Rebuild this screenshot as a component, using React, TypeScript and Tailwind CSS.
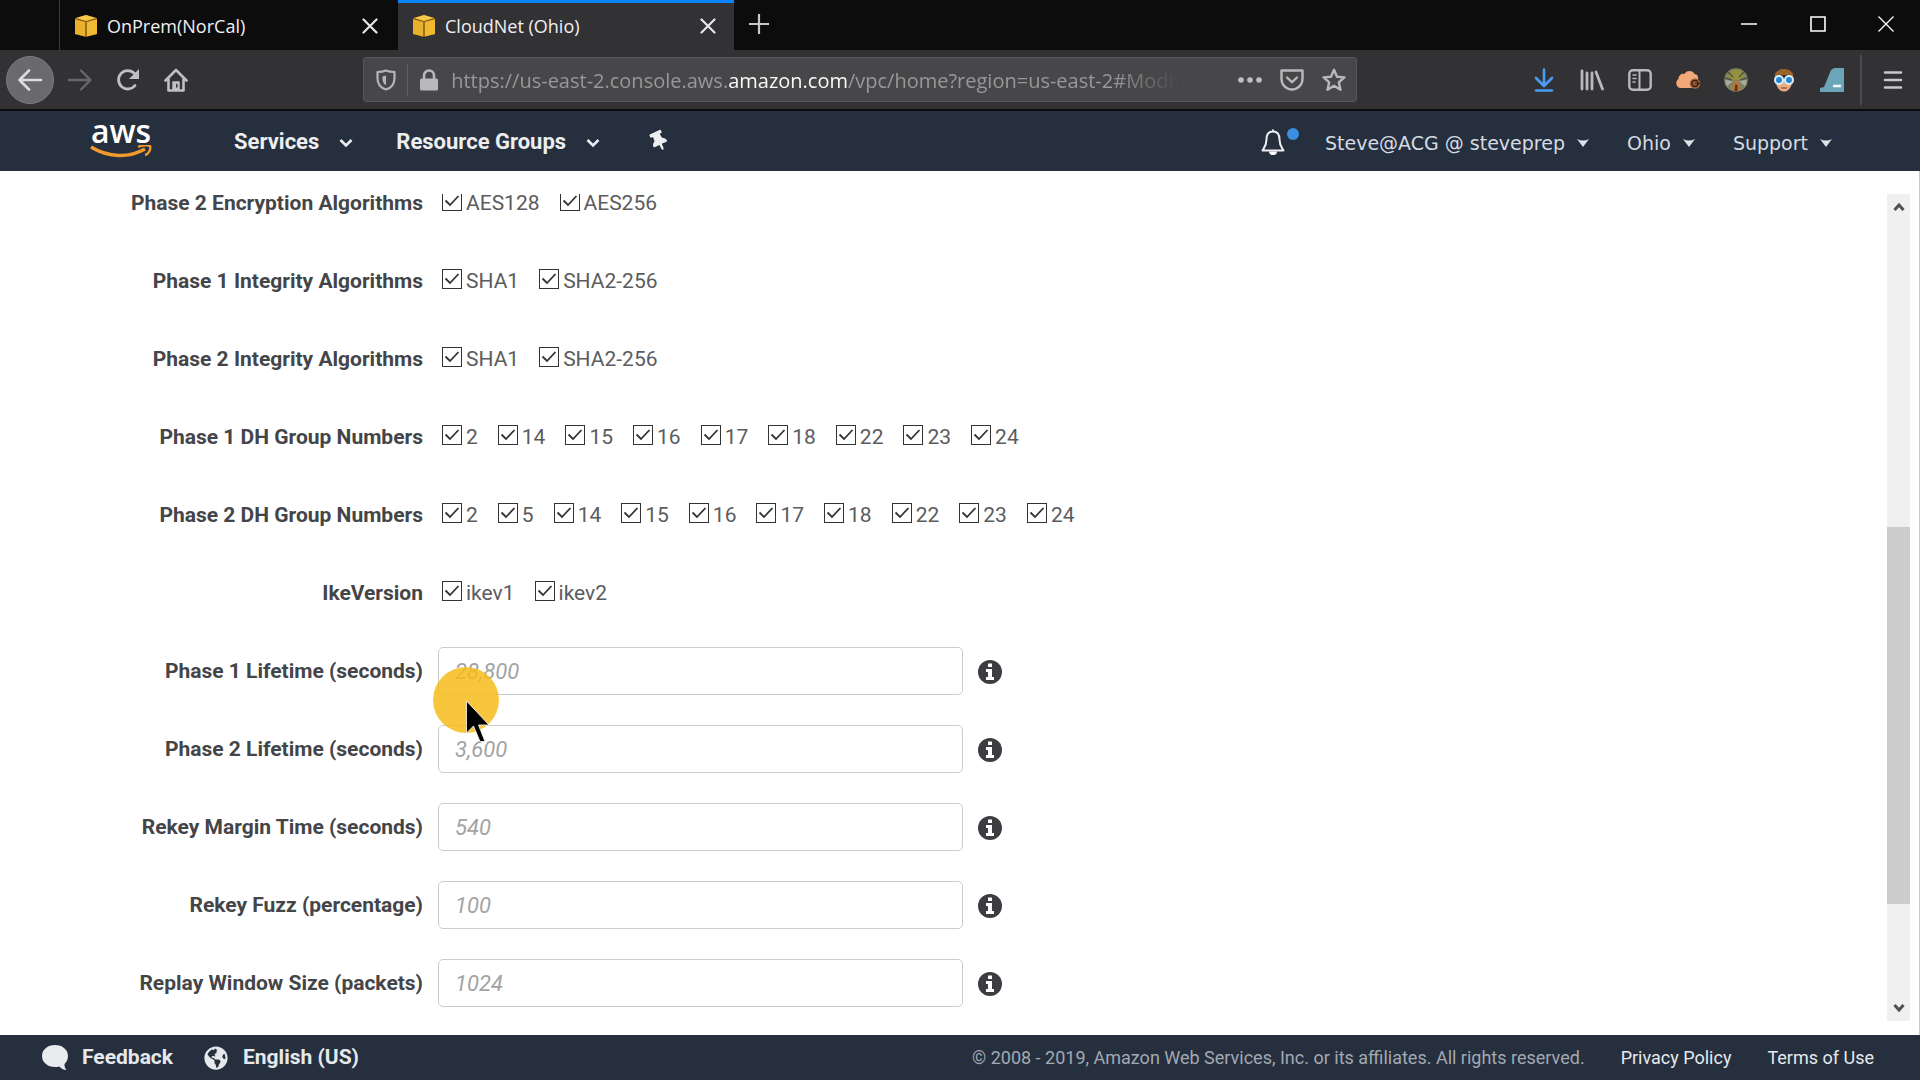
import type { ReactNode } from "react";
import { FaThumbtack, FaGlobeAmericas } from "react-icons/fa";

function Cube() {
  return (
    <svg viewBox="0 0 24 24" className="size-6 shrink-0">
      <path d="M12 1 23 4v16l-11 3L1 20V4z" fill="#8a5f10" />
      <path d="M12 1 22 4 12 7 2 4z" fill="#f7c94b" />
      <path d="M1 5.200 11.200 8v14.500L1 20z" fill="#e9b02b" />
      <path d="M23 5.200 12.800 8v14.500L23 20z" fill="#f0b932" />
    </svg>
  );
}

function Cross() {
  return (
    <svg viewBox="0 0 16 16" className="size-4" stroke="#e6e6e8" strokeWidth="2.200" strokeLinecap="round">
      <path d="M1.500 1.500l13 13M14.500 1.500l-13 13" />
    </svg>
  );
}

function Tab({ title, active }: { title: string; active?: boolean }) {
  return (
    <div
      className={
        active
          ? "flex w-[336px] items-center border-t-[3px] border-[#0a84ff] bg-[#323234] pb-[2px] pl-[14px] pr-[18px]"
          : "flex w-[339px] items-center border-l border-[#3a3a3c] pl-[14px] pr-[20px] pt-px"
      }
    >
      <Cube />
      <span className="ml-[9px] flex-1 text-lg text-[#f0f0f2]">{title}</span>
      <button aria-label={"Close " + title}>
        <Cross />
      </button>
    </div>
  );
}

function ToolButton({ label, children }: { label: string; children: ReactNode }) {
  return (
    <button aria-label={label} className="flex h-12 w-12 items-center justify-center">
      {children}
    </button>
  );
}

function TabStrip() {
  return (
    <header className="flex h-[50px] shrink-0 bg-[#0c0c0d] pl-[59px]">
      <Tab title="OnPrem(NorCal)" />
      <Tab title="CloudNet (Ohio)" active />
      <button aria-label="New tab" className="flex w-[50px] items-center justify-center pb-[2px]">
        <svg viewBox="0 0 22 22" className="size-[22px]" stroke="#c8c8ca" strokeWidth="2.200">
          <path d="M11 1v20M1 11h20" />
        </svg>
      </button>
      <div className="flex flex-1 justify-end pb-[2px]">
        <button aria-label="Minimize" className="flex w-[69px] items-center justify-center">
          <svg viewBox="0 0 16 16" className="size-4" stroke="#fff" strokeWidth="1.500">
            <path d="M0 8h16" />
          </svg>
        </button>
        <button aria-label="Maximize" className="flex w-[69px] items-center justify-center">
          <svg viewBox="0 0 16 16" className="size-4" fill="none" stroke="#fff" strokeWidth="1.600">
            <path d="M1 1h14v14H1z" />
          </svg>
        </button>
        <button aria-label="Close window" className="flex w-[68px] items-center justify-center">
          <svg viewBox="0 0 16 16" className="size-4" stroke="#fff" strokeWidth="1.300">
            <path d="M.5.5l15 15M15.500.5l-15 15" />
          </svg>
        </button>
      </div>
    </header>
  );
}

function AddressBar() {
  return (
    <div className="flex h-[45px] flex-1 items-center rounded-[3px] border border-[#58585b] bg-[#474749]">
      <button aria-label="Tracking protection" className="flex h-8 w-11 items-center justify-center border-r border-[#626265]">
        <svg viewBox="0 0 20 22" className="h-[22px] w-5" fill="none" stroke="#b6b6b8" strokeWidth="2.200">
          <path d="M10 1.500c2.500 1.200 5 1.500 8.500 1.500v6c0 6-3.500 10-8.500 11.500C5 19 1.500 15 1.500 9V3C5 3 7.500 2.700 10 1.500z" strokeLinejoin="round" />
          <path d="M10 6.500c-1.200.4-2.300.6-3.500.7V10c0 3 1.300 5 3.500 6.200z" fill="#b6b6b8" stroke="none" />
        </svg>
      </button>
      <button aria-label="Site information" className="ml-[11px] w-5">
        <svg viewBox="0 0 20 22" className="h-[22px] w-5">
          <path d="M5 10V6.500a5 5 0 0 1 10 0V10" fill="none" stroke="#b9b9bb" strokeWidth="2.600" />
          <rect x="1" y="9.500" width="18" height="12" rx="1.500" fill="#b9b9bb" />
        </svg>
      </button>
      <div className="ml-3 min-w-0 max-w-[728px] flex-1 overflow-hidden whitespace-nowrap pt-[2px] text-xl text-[#98989a] [mask-image:linear-gradient(to_right,black_91%,transparent)]">
        https://us-east-2.console.aws.<span className="text-[#f9f9fa]">amazon.com</span>/vpc/home?region=us-east-2#Modif
      </div>
      <div className="ml-auto flex pr-px">
        <button aria-label="Page actions" className="flex w-[42px] items-center justify-center">
          <svg viewBox="0 0 24 6" className="h-[6px] w-6" fill="#c0c0c2">
            <circle cx="3" cy="3" r="2.800" />
            <circle cx="12" cy="3" r="2.800" />
            <circle cx="21" cy="3" r="2.800" />
          </svg>
        </button>
        <button aria-label="Save to Pocket" className="flex w-[42px] items-center justify-center">
          <svg viewBox="0 0 24 22" className="h-[22px] w-6" fill="none" stroke="#b9b9bb" strokeWidth="2.400" strokeLinejoin="round" strokeLinecap="round">
            <path d="M1.500 1.500h21v8.500a10.500 10.500 0 0 1-21 0z" />
            <path d="M7 8.500l5 4.700 5-4.700" />
          </svg>
        </button>
        <button aria-label="Bookmark this page" className="flex w-[42px] items-center justify-center">
          <svg viewBox="0 0 24 24" className="size-6" fill="none" stroke="#b9b9bb" strokeWidth="2.400" strokeLinejoin="round">
            <path d="M12 1.800l3 6.900 7.400.7-5.600 4.900 1.700 7.400L12 17.800l-6.500 3.900 1.700-7.400L1.600 9.400 9 8.700z" />
          </svg>
        </button>
      </div>
    </div>
  );
}

function Toolbar() {
  return (
    <div className="flex h-[61px] shrink-0 items-center border-b-2 border-[#0c0c0d] bg-[#323234]">
      <div className="flex pl-[6px]">
        <button aria-label="Back" className="mr-[2px] flex size-12 items-center justify-center rounded-full border border-[#7c7c7e] bg-[#6a6a6c]">
          <svg viewBox="0 0 26 24" className="h-6 w-[26px]" fill="none" stroke="#dcdcde" strokeWidth="2.600" strokeLinecap="round" strokeLinejoin="round">
            <path d="M24 12H2.500M12 2.500 2.500 12l9.500 9.500" />
          </svg>
        </button>
        <ToolButton label="Forward">
          <svg viewBox="0 0 26 24" className="h-6 w-[26px]" fill="none" stroke="#68686a" strokeWidth="2.400" strokeLinecap="round" strokeLinejoin="round">
            <path d="M2 12h21.500M14 2.500l9.500 9.500-9.500 9.500" />
          </svg>
        </ToolButton>
        <ToolButton label="Reload">
          <svg viewBox="0 0 24 24" className="size-6" fill="none" stroke="#c0c0c2" strokeWidth="2.800" strokeLinecap="round">
            <path d="M19 17.500A9.200 9.200 0 1 1 18.500 5.500" />
            <path d="M23 1v10H13z" fill="#c0c0c2" stroke="none" />
          </svg>
        </ToolButton>
        <ToolButton label="Home">
          <svg viewBox="0 0 24 24" className="size-6" fill="none" stroke="#c0c0c2" strokeWidth="2.600" strokeLinecap="round" strokeLinejoin="round">
            <path d="M1.500 12.500 12 2l10.500 10.500M4.500 11v11.500h15V11" />
            <path d="M9 22v-8h6v8" fill="#c0c0c2" strokeWidth="1.500" />
            <path d="M12.800 16.500v2.500" stroke="#323234" strokeWidth="1.500" />
          </svg>
        </ToolButton>
      </div>
      <div className="w-[8.5vw]" />
      <AddressBar />
      <div className="w-[8.5vw]" />
      <div className="flex items-center">
        <ToolButton label="Downloads">
          <svg viewBox="0 0 20 24" className="h-6 w-5" fill="none" stroke="#4a9cf5" strokeWidth="2.600" strokeLinecap="round" strokeLinejoin="round">
            <path d="M10 1.500V17M2 10l8 8 8-8M2 22.500h16" />
          </svg>
        </ToolButton>
        <ToolButton label="Library">
          <svg viewBox="0 0 24 22" className="h-[22px] w-6" fill="none" stroke="#b9b9bb" strokeWidth="2.800" strokeLinecap="round">
            <path d="M2 2v18M7 4v16M12 4v16M16 3l6.500 17" />
          </svg>
        </ToolButton>
        <ToolButton label="Sidebars">
          <svg viewBox="0 0 24 22" className="h-[22px] w-6" fill="none" stroke="#b9b9bb" strokeWidth="2.400" strokeLinecap="round">
            <rect x="1.300" y="1.300" width="21.400" height="19.400" rx="3.500" />
            <path d="M11.500 2v18" strokeWidth="2" />
            <path d="M5 6h3M5 9.500h3M5 13h2" strokeWidth="1.500" />
          </svg>
        </ToolButton>
        <ToolButton label="Cookie cloud">
          <svg viewBox="0 0 26 22" className="h-[22px] w-[26px]">
            <path d="M5 19a5 5 0 0 1-1.500-9C3.500 6 7 4 9.500 5 11 1 18 1 19.500 5c3 0 4 3 3.500 5.500L21 19z" fill="#f2a878" />
            <circle cx="20" cy="14.500" r="5.300" fill="#a8663c" />
            <circle cx="20" cy="14.500" r="3" fill="none" stroke="#3d2416" strokeWidth="1.500" />
            <path d="M20 14.500h5" stroke="#3d2416" strokeWidth="1.200" />
          </svg>
        </ToolButton>
        <ToolButton label="Page extension">
          <svg viewBox="0 0 24 24" className="size-6">
            <circle cx="12" cy="12" r="11.800" fill="#7f8463" />
            <path d="M4 7c2-5 12-8 16 0-2 5-6 5-8 5S6 11 4 7z" fill="#97903f" />
            <path d="M1 12l8 1-6 5zM23 12l-8 1 6 5z" fill="#a9ada0" />
            <path d="M1 10l7 2M23 10l-7 2M4 4l5 5M20 4l-5 5" stroke="#4e5645" strokeWidth="1.500" />
            <path d="M8 22l1.500-8 3-2 3 3 1 8z" fill="#b4773c" />
            <path d="M10.500 23l1-7 2 1v6z" fill="#672f18" />
          </svg>
        </ToolButton>
        <ToolButton label="Profile extension">
          <svg viewBox="0 0 24 24" className="size-6">
            <path d="M4 11h16c1 6-3 12.500-8 12.500S3 17 4 11z" fill="#e8ac84" />
            <path d="M3 10C1 4 7 1 12 1s11 3 9 9l-4-3H7z" fill="#9a6227" />
            <circle cx="7" cy="12" r="5" fill="#d9f0fb" />
            <circle cx="17" cy="12" r="5" fill="#d9f0fb" />
            <circle cx="7" cy="12" r="3" fill="#2687cf" />
            <circle cx="17" cy="12" r="3" fill="#2687cf" />
            <path d="M9 20h6" stroke="#9c4c39" strokeWidth="1.200" />
          </svg>
        </ToolButton>
        <ToolButton label="Fin extension">
          <svg viewBox="0 0 24 24" className="size-6">
            <path d="M0 24v-4l4-1L11 2l3-2h10v24z" fill="#6ba5b8" />
            <path d="M13 18h8" stroke="#eef8fb" strokeWidth="2.500" />
          </svg>
        </ToolButton>
        <div className="ml-1 h-[50px] w-[2px] bg-[#4a4a4c]" />
        <button aria-label="Open menu" className="ml-[7px] mr-[3px] flex h-12 w-12 items-center justify-center">
          <svg viewBox="0 0 20 20" className="size-5" stroke="#c8c8ca" strokeWidth="2.600" strokeLinecap="round">
            <path d="M2 2.500h16M2 10h16M2 17.500h16" />
          </svg>
        </button>
      </div>
    </div>
  );
}

function Chevron() {
  return (
    <svg viewBox="0 0 14 10" className="mt-1 h-[10px] w-[14px]" fill="none" stroke="#eceef0" strokeWidth="2.600">
      <path d="M1.500 2 7 7.500 12.500 2" />
    </svg>
  );
}

function Caret() {
  return (
    <svg viewBox="0 0 12 8" className="h-2 w-3" fill="#dfe3e8">
      <path d="M0 0q6 3 12 0L6 8z" />
    </svg>
  );
}

function ConsoleNav() {
  return (
    <nav className="flex h-[60px] shrink-0 items-center bg-[#252f3e] pl-[90px] pr-[88px] text-[22px] font-bold text-[#eceef0]">
      <a href="#home" aria-label="AWS home" className="flex w-[62px] flex-col items-center pb-1">
        <span className="font-['Open_Sans',sans-serif] text-[32px] font-semibold leading-7 text-white">aws</span>
        <svg viewBox="0 0 62 17" className="h-[17px] w-[62px]">
          <path d="M1 2c18 11 38 11 54 2" fill="none" stroke="#f49a2c" strokeWidth="3.400" />
          <path d="M48 2c4-2 10-2.300 12-1 1 3-1 8-5 9" fill="none" stroke="#f49a2c" strokeWidth="2.400" />
        </svg>
      </a>
      <button className="ml-[82px] flex items-center gap-5">
        Services <Chevron />
      </button>
      <button className="ml-[43px] flex items-center gap-5">
        Resource Groups <Chevron />
      </button>
      <button aria-label="Pin shortcuts" className="ml-[49px] -rotate-[25deg]">
        <FaThumbtack className="size-5" />
      </button>
      <div className="ml-auto flex items-center pt-1 font-['DejaVu_Sans',sans-serif] text-[19px] font-normal text-[#d5dbe2]">
        <button aria-label="Notifications" className="relative mb-[3px] mr-10">
          <svg viewBox="0 0 24 26" className="h-[26px] w-6" fill="none" stroke="#eceef0" strokeWidth="2" strokeLinejoin="round">
            <path d="M12 2.500c-5 0-6.500 4-6.500 8 0 6-2 8-4 11h21c-2-3-4-5-4-11 0-4-1.500-8-6.500-8zM12 2.500V.5" />
            <path d="M8 22.500a4 3.500 0 0 0 8 0z" fill="#fff" stroke="none" />
          </svg>
          <span className="absolute -right-[14px] -top-px size-3 rounded-full bg-[#3b8ee0]" />
        </button>
        <button className="flex items-center gap-3">
          Steve@ACG @ steveprep <Caret />
        </button>
        <button className="ml-[38px] flex items-center gap-3">
          Ohio <Caret />
        </button>
        <button className="ml-[38px] flex items-center gap-3">
          Support <Caret />
        </button>
      </div>
    </nav>
  );
}

function Row({ label, htmlFor, children }: { label: string; htmlFor?: string; children: ReactNode }) {
  return (
    <div className="flex h-[78px] items-center">
      {htmlFor ? (
        <label htmlFor={htmlFor} className="w-[423px] shrink-0 pt-[2px] text-right font-bold">
          {label}
        </label>
      ) : (
        <span className="w-[423px] shrink-0 pt-[2px] text-right font-bold">{label}</span>
      )}
      {children}
    </div>
  );
}

function CheckRow({ label, options }: { label: string; options: string[] }) {
  return (
    <Row label={label}>
      <div role="group" aria-label={label} className="ml-[19px] flex gap-5">
        {options.map((option) => (
          <label key={option} className="flex items-center gap-1 text-[#5b5c5e]">
            <span className="relative mb-1 size-5">
              <input type="checkbox" defaultChecked className="peer block size-5 appearance-none border-[1.5px] border-[#333] bg-white" />
              <svg viewBox="0 0 20 20" className="pointer-events-none absolute inset-0 hidden size-5 peer-checked:block" fill="none" stroke="#333" strokeWidth="1.800">
                <path d="M3.500 9.500 8 14 16.500 5" />
              </svg>
            </span>
            <span className="pt-[2px]">{option}</span>
          </label>
        ))}
      </div>
    </Row>
  );
}

function Pointer() {
  return (
    <div className="pointer-events-none absolute -left-[5px] top-5 z-10">
      <div className="size-[66px] rounded-full bg-[#f7bc1a]/85" />
      <svg viewBox="0 0 24 42" className="absolute left-[33px] top-[33px] h-[43px] w-6">
        <path d="M.5.5v32l7-7 6.500 15.500h5L12.500 24.500H23z" fill="#000" stroke="#fff" strokeWidth=".8" />
      </svg>
    </div>
  );
}

function InfoIcon() {
  return (
    <svg viewBox="0 0 24 24" className="size-6">
      <circle cx="12" cy="12" r="12" fill="#3c3d40" />
      <path d="M10 3.500h4v3.500h-4zM8 9h6v8h2v3H8v-3h2v-5H8z" fill="#fff" />
    </svg>
  );
}

function FieldRow({ id, label, placeholder, children }: { id: string; label: string; placeholder: string; children?: ReactNode }) {
  return (
    <Row label={label} htmlFor={id}>
      <div className="relative ml-[15px] w-[525px]">
        <input
          id={id}
          placeholder={placeholder}
          className="block h-12 w-full rounded-[5px] border-[1.5px] border-[#ccc] bg-white pl-4 text-[22px] italic placeholder:text-[#a3a3a3]"
        />
        {children}
      </div>
      <button aria-label={"About " + label} className="ml-[15px] mt-[2px]">
        <InfoIcon />
      </button>
    </Row>
  );
}

function ScrollRail() {
  return (
    <div className="mb-[14px] mr-[9px] flex w-[23px] flex-col items-center bg-[#f0f0f0]">
      <button aria-label="Scroll up" className="flex h-[26px] items-center">
        <svg viewBox="0 0 12 10" className="h-[10px] w-3" fill="none" stroke="#505050" strokeWidth="3">
          <path d="M1.500 8 6 3l4.500 5" />
        </svg>
      </button>
      <div className="flex w-full flex-1 flex-col">
        <div className="flex-[307]" />
        <div className="flex-[376] bg-[#cdcdcd]" />
        <div className="flex-[91]" />
      </div>
      <button aria-label="Scroll down" className="flex h-[26px] items-center">
        <svg viewBox="0 0 12 10" className="h-[10px] w-3" fill="none" stroke="#505050" strokeWidth="3">
          <path d="M1.500 2 6 7l4.500-5" />
        </svg>
      </button>
    </div>
  );
}

export default function App() {
  return (
    <div className="flex h-screen flex-col overflow-hidden bg-white font-[Roboto,sans-serif]">
      <div className="shrink-0 font-['Open_Sans',sans-serif]">
        <TabStrip />
        <Toolbar />
      </div>
      <ConsoleNav />
      <main className="flex min-h-0 flex-1 border-r border-[#c8c8cc] pt-[23px] text-[21px] text-[#444548]">
        <div className="min-w-0 flex-1 overflow-hidden">
          <form className="-mt-[30px]">
            <CheckRow label="Phase 2 Encryption Algorithms" options={["AES128", "AES256"]} />
            <CheckRow label="Phase 1 Integrity Algorithms" options={["SHA1", "SHA2-256"]} />
            <CheckRow label="Phase 2 Integrity Algorithms" options={["SHA1", "SHA2-256"]} />
            <CheckRow label="Phase 1 DH Group Numbers" options={["2", "14", "15", "16", "17", "18", "22", "23", "24"]} />
            <CheckRow label="Phase 2 DH Group Numbers" options={["2", "5", "14", "15", "16", "17", "18", "22", "23", "24"]} />
            <CheckRow label="IkeVersion" options={["ikev1", "ikev2"]} />
            <FieldRow id="p1-lifetime" label="Phase 1 Lifetime (seconds)" placeholder="28,800">
              <Pointer />
            </FieldRow>
            <FieldRow id="p2-lifetime" label="Phase 2 Lifetime (seconds)" placeholder="3,600" />
            <FieldRow id="rekey-margin" label="Rekey Margin Time (seconds)" placeholder="540" />
            <FieldRow id="rekey-fuzz" label="Rekey Fuzz (percentage)" placeholder="100" />
            <FieldRow id="replay-window" label="Replay Window Size (packets)" placeholder="1024" />
          </form>
        </div>
        <ScrollRail />
      </main>
      <footer className="flex h-[45px] shrink-0 items-center bg-[#252f3e] pl-[42px] pr-[46px] text-lg text-[#e6e9ec]">
        <button className="flex items-center gap-[14px] text-[21px] font-bold">
          <svg viewBox="0 0 26 25" className="h-[25px] w-[26px]" fill="#e9ebee">
            <path d="M13 0C5.500 0 0 4.700 0 11s5.500 11 13 11c1.500 0 3-.2 4.300-.6 1.700 2 4.200 3.300 7.200 3.600-1.500-1.700-2.200-3.700-2-6C24.700 17 26 14.200 26 11 26 4.700 20.500 0 13 0z" />
          </svg>
          Feedback
        </button>
        <button className="ml-[31px] flex items-center gap-[15px] text-[21px] font-bold">
          <FaGlobeAmericas className="size-6" /> English (US)
        </button>
        <span className="ml-auto text-[#a3a9b1]">© 2008 - 2019, Amazon Web Services, Inc. or its affiliates. All rights reserved.</span>
        <a href="#privacy" className="ml-9">Privacy Policy</a>
        <a href="#terms" className="ml-9">Terms of Use</a>
      </footer>
    </div>
  );
}
